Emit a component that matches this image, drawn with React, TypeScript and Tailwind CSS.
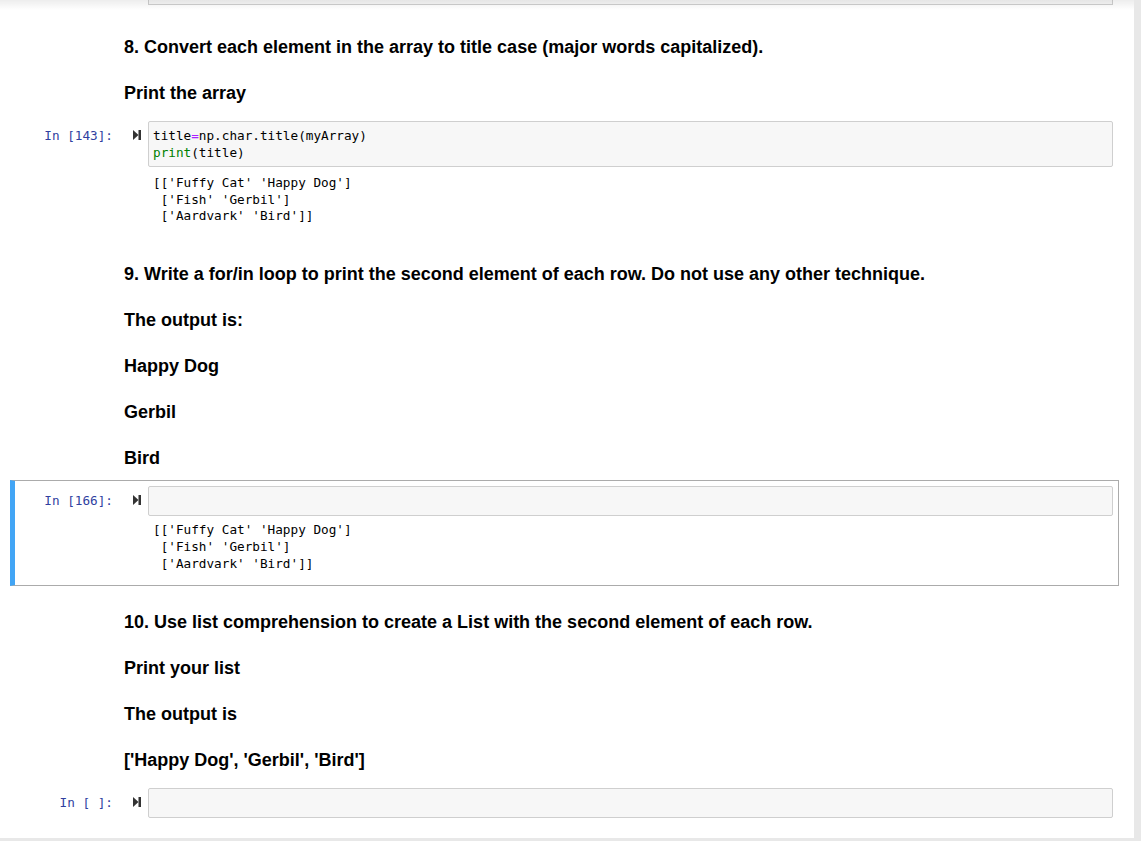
import React from "react";

const mono = { fontFamily: '"DejaVu Sans Mono", "Liberation Mono", monospace' };

function RunIcon() {
  return (
    <svg width="8" height="10" viewBox="0 0 8 10" className="block">
      <path d="M0 0 L5.5 5 L0 10 Z" fill="#333" />
      <rect x="5.5" y="0" width="2.5" height="10" fill="#333" />
    </svg>
  );
}

function Prompt({ label, width }: { label: string; width: string }) {
  return (
    <div
      className={`${width} shrink-0 text-right pr-[5px] text-[12.7px] leading-[17px] text-[#303F9F] pt-[6px]`}
      style={mono}
    >
      {label}
    </div>
  );
}

function RunCol() {
  return (
    <div className="w-[30px] shrink-0 flex justify-start pt-[9px] pl-[15px]">
      <RunIcon />
    </div>
  );
}

function Md({ items, className }: { items: string[]; className: string }) {
  return (
    <div
      className={`pl-[124px] flex flex-col gap-[26px] text-[18px] leading-[20px] font-bold text-black ${className}`}
      style={{ fontFamily: '"Liberation Sans", Arial, sans-serif' }}
    >
      {items.map((t, i) => (
        <div key={i}>{t}</div>
      ))}
    </div>
  );
}

const outputLines = ["[['Fuffy Cat' 'Happy Dog']", " ['Fish' 'Gerbil']", " ['Aardvark' 'Bird']]"];

export default function App() {
  return (
    <div className="w-full h-[841px] bg-[#e8e8e8] overflow-hidden">
      <div className="w-[1134px] h-[838px] bg-white relative">
        <div className="absolute left-0 top-0 w-full h-[10px] pointer-events-none bg-gradient-to-b from-[rgba(0,0,0,0.07)] to-transparent" />
        {/* previous cell bottom */}
        <div className="ml-[148px] w-[965px] h-[5px] border border-t-0 border-[#cfcfcf] bg-[#f7f7f7]" />

        <Md
          className="mt-[32px]"
          items={[
            "8. Convert each element in the array to title case (major words capitalized).",
            "Print the array",
          ]}
        />

        {/* code cell 143 */}
        <div className="mt-[18px] flex">
          <Prompt label="In [143]:" width="w-[118px]" />
          <RunCol />
          <div
            className="w-[965px] border border-[#cfcfcf] bg-[#f7f7f7] rounded-[2px] px-[4px] py-[5px] text-[12.7px] leading-[17px] text-black"
            style={mono}
          >
            <div>
              title<span className="text-[#AA22FF]">=</span>np.char.title(myArray)
            </div>
            <div>
              <span className="text-[#008000]">print</span>(title)
            </div>
          </div>
        </div>
        <div className="mt-[8px] pl-[153px] text-[12.7px] leading-[16.5px] text-black whitespace-pre" style={mono}>
          {outputLines.map((l, i) => (
            <div key={i}>{l}</div>
          ))}
        </div>

        <Md
          className="mt-[39.5px]"
          items={[
            "9. Write a for/in loop to print the second element of each row. Do not use any other technique.",
            "The output is:",
            "Happy Dog",
            "Gerbil",
            "Bird",
          ]}
        />

        {/* selected cell */}
        <div className="mt-[12px] ml-[10px] w-[1109px] border border-[#ababab] border-l-[5px] border-l-[#42A5F5] p-[5px]">
          <div className="flex">
            <Prompt label="In [166]:" width="w-[98px]" />
            <RunCol />
            <div className="w-[965px] h-[30px] border border-[#cfcfcf] bg-[#f7f7f7] rounded-[2px]" />
          </div>
          <div className="mt-[5px] pb-[8px] pl-[133px] text-[12.7px] leading-[17px] text-black whitespace-pre" style={mono}>
            {outputLines.map((l, i) => (
              <div key={i}>{l}</div>
            ))}
          </div>
        </div>

        <Md
          className="mt-[26px]"
          items={[
            "10. Use list comprehension to create a List with the second element of each row.",
            "Print your list",
            "The output is",
            "['Happy Dog', 'Gerbil', 'Bird']",
          ]}
        />

        {/* empty cell */}
        <div className="mt-[18px] flex">
          <Prompt label="In [ ]:" width="w-[118px]" />
          <RunCol />
          <div className="w-[965px] h-[30px] border border-[#cfcfcf] bg-[#f7f7f7] rounded-[2px]" />
        </div>
      </div>
    </div>
  );
}
